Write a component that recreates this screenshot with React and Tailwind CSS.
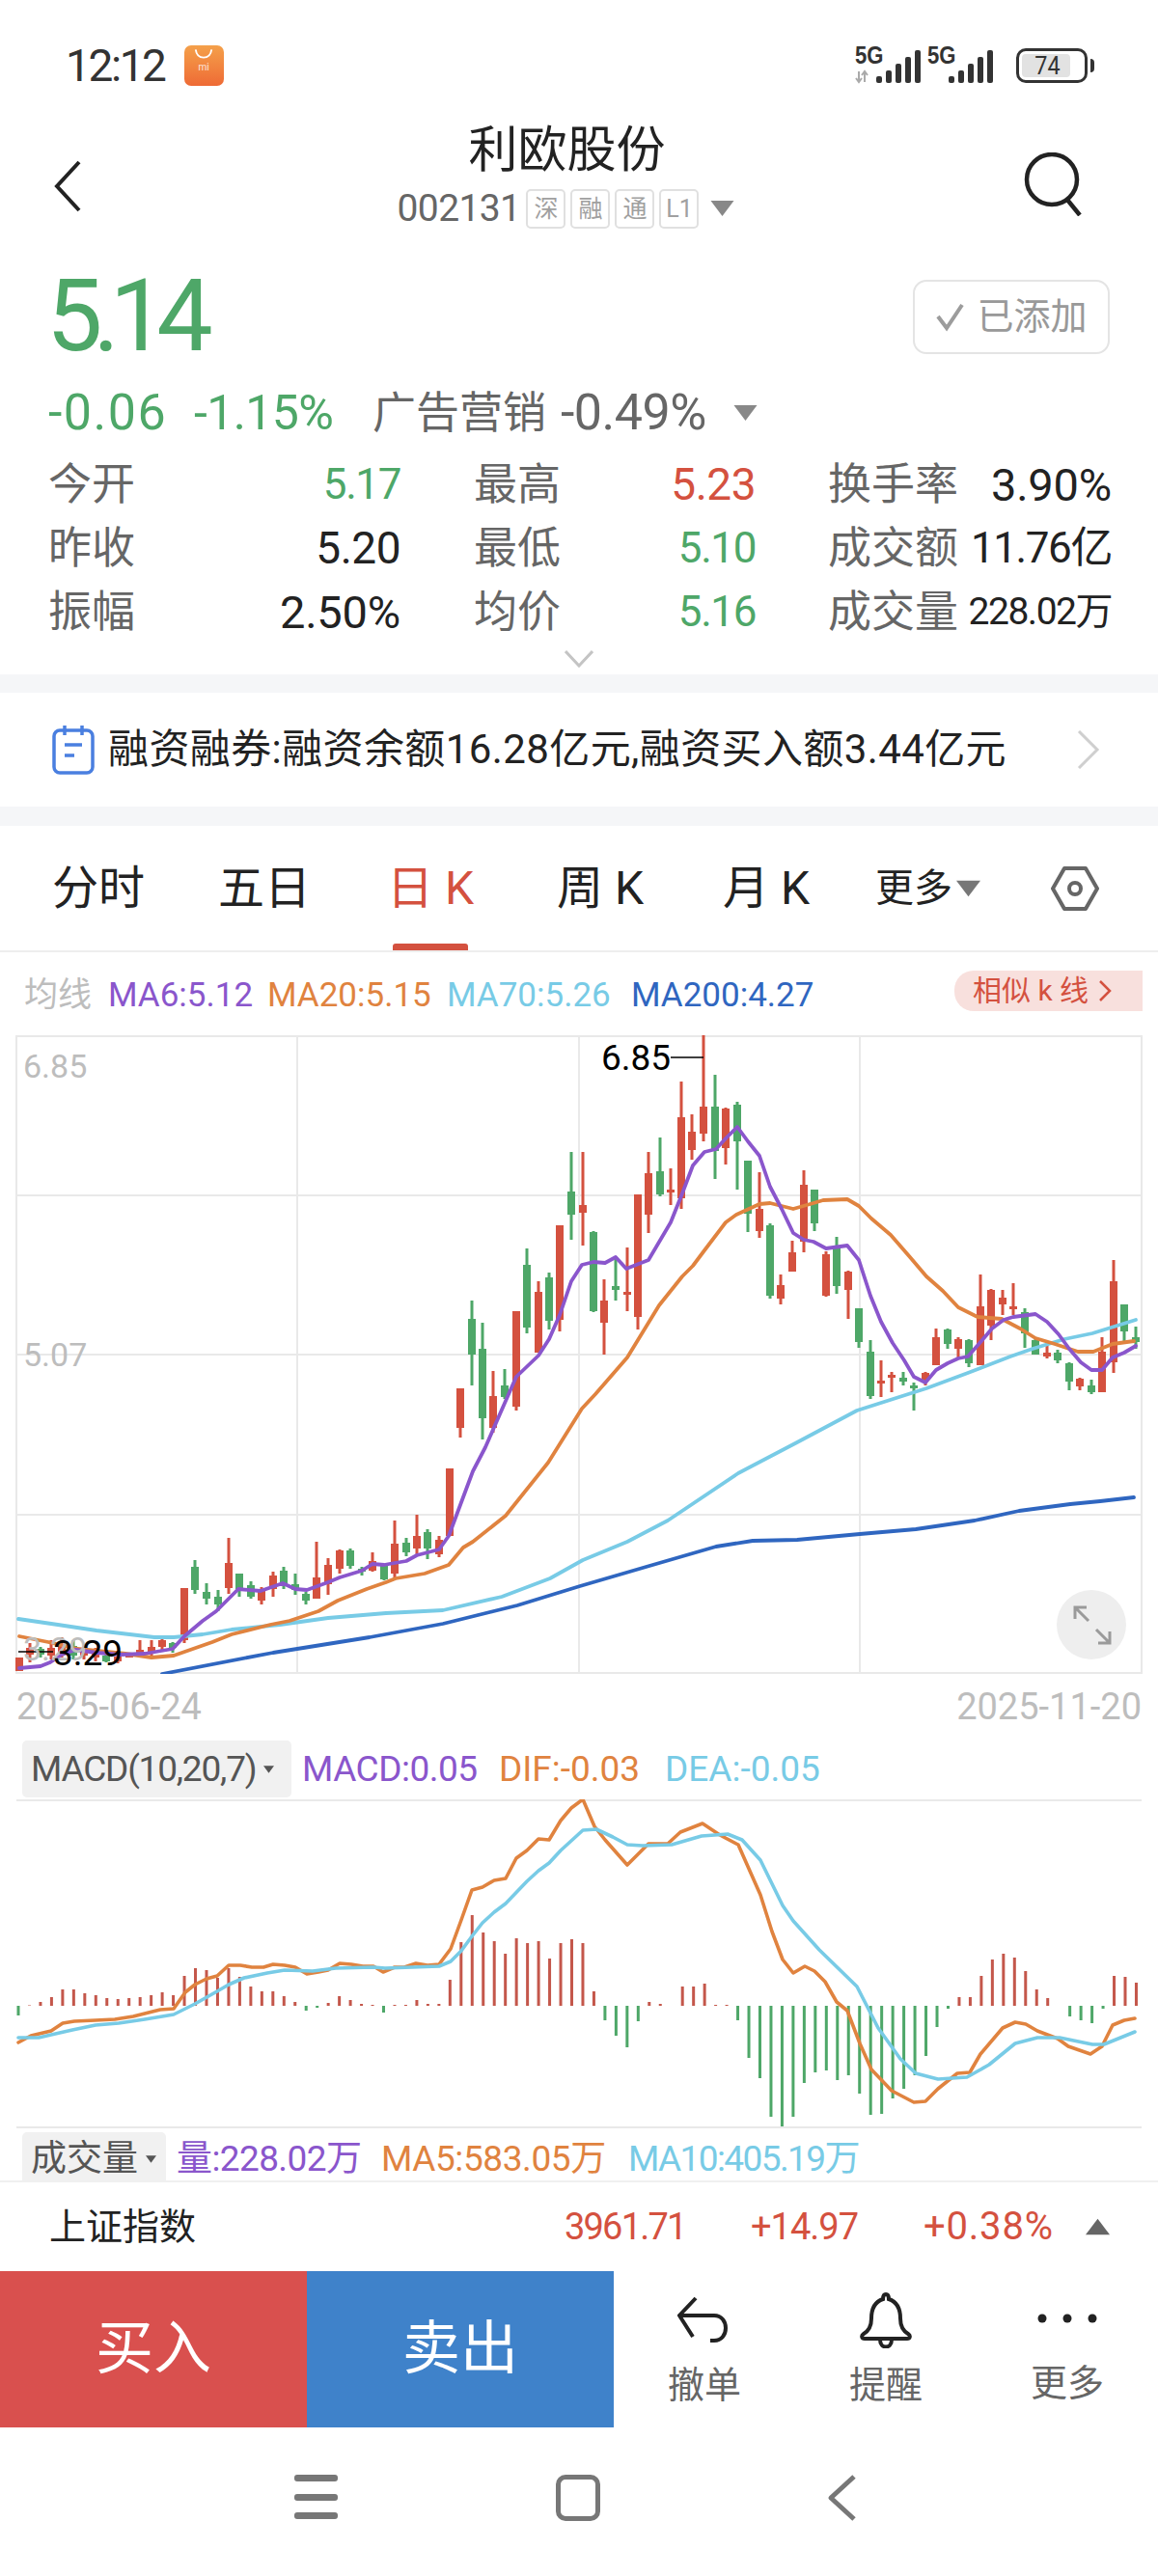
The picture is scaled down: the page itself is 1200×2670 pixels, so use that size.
import React from "react";

const G = "#4ea768", R = "#d4513f", PU = "#8a56cc", OR = "#e0833f", CY = "#78cbe6", BL = "#2f66c0";

const candles = [
[20,1718,1718,1732,1732,'r'],[31,1703,1708,1715,1723,'r'],[42,1707,1709,1715,1718,'g'],[53,1700,1708,1716,1720,'r'],[64,1697,1704,1714,1718,'r'],[76,1700,1706,1716,1720,'g'],[87,1706,1709,1716,1720,'r'],[99,1708,1712,1718,1722,'r'],
[110,1713,1716,1722,1723,'g'],[122,1717,1717,1722,1724,'r'],[134,1715,1715,1718,1718,'r'],[145,1700,1710,1715,1718,'r'],[157,1700,1707,1713,1717,'r'],[168,1698,1700,1707,1710,'r'],[179,1702,1703,1708,1713,'g'],[191,1646,1646,1700,1703,'r'],
[202,1617,1624,1648,1652,'g'],[214,1641,1650,1657,1663,'g'],[226,1648,1655,1663,1670,'g'],[237,1594,1620,1646,1652,'r'],[248,1631,1631,1647,1655,'g'],[260,1639,1643,1655,1657,'g'],[271,1645,1648,1659,1663,'r'],[283,1629,1633,1647,1655,'r'],
[294,1624,1628,1642,1647,'g'],[306,1631,1642,1648,1653,'g'],[317,1650,1652,1659,1663,'g'],[328,1598,1635,1657,1657,'r'],[340,1615,1622,1642,1653,'r'],[352,1606,1607,1626,1631,'r'],[363,1605,1607,1623,1626,'g'],[375,1624,1626,1628,1633,'g'],
[386,1609,1618,1628,1629,'r'],[398,1622,1623,1637,1638,'g'],[409,1576,1600,1631,1635,'r'],[421,1594,1599,1609,1613,'g'],[432,1570,1592,1605,1613,'r'],[443,1585,1588,1605,1616,'g'],[455,1592,1596,1611,1614,'r'],[466,1522,1522,1592,1592,'r'],
[477,1439,1439,1480,1490,'r'],[489,1348,1367,1404,1436,'g'],[500,1371,1398,1470,1492,'g'],[511,1421,1447,1480,1485,'r'],[523,1419,1436,1448,1450,'g'],[535,1359,1359,1458,1462,'r'],[546,1294,1311,1376,1382,'g'],[558,1328,1339,1402,1402,'r'],
[569,1319,1324,1369,1378,'g'],[580,1270,1270,1368,1380,'r'],[592,1194,1235,1259,1285,'g'],[604,1194,1249,1257,1291,'r'],[615,1276,1277,1359,1360,'g'],[626,1326,1348,1371,1404,'r'],[638,1303,1333,1337,1348,'g'],[650,1293,1339,1342,1359,'r'],
[661,1238,1238,1365,1378,'r'],[672,1194,1216,1259,1278,'r'],[684,1179,1214,1238,1240,'g'],[695,1211,1233,1236,1249,'r'],[706,1121,1158,1242,1253,'r'],[717,1155,1173,1192,1202,'r'],[729,1073,1147,1175,1183,'r'],[741,1114,1147,1193,1222,'g'],
[752,1148,1149,1190,1207,'r'],[764,1142,1145,1183,1233,'g'],[775,1203,1203,1258,1277,'g'],[787,1215,1253,1276,1283,'r'],[798,1268,1270,1343,1346,'g'],[809,1321,1332,1346,1352,'r'],[821,1286,1298,1318,1318,'r'],[833,1213,1228,1287,1298,'r'],
[844,1233,1233,1268,1276,'g'],[856,1297,1300,1343,1344,'r'],[867,1282,1293,1333,1341,'g'],[879,1317,1318,1337,1367,'r'],[890,1356,1356,1391,1397,'g'],[902,1389,1401,1447,1450,'g'],[913,1410,1431,1433,1448,'r'],[924,1422,1425,1428,1443,'r'],
[936,1422,1428,1432,1436,'g'],[947,1433,1436,1439,1462,'g'],[959,1422,1423,1430,1436,'r'],[970,1377,1386,1415,1415,'r'],[982,1377,1378,1393,1398,'g'],[993,1386,1388,1398,1408,'r'],[1004,1388,1389,1413,1417,'g'],[1016,1321,1354,1415,1415,'r'],
[1027,1336,1337,1374,1389,'r'],[1039,1337,1345,1352,1363,'r'],[1050,1330,1354,1357,1363,'r'],[1062,1356,1360,1382,1397,'g'],[1073,1388,1389,1404,1404,'g'],[1085,1393,1402,1406,1408,'r'],[1096,1399,1402,1410,1413,'g'],[1108,1412,1413,1432,1441,'g'],
[1119,1428,1429,1437,1441,'r'],[1131,1430,1436,1443,1445,'g'],[1142,1386,1401,1443,1443,'r'],[1154,1306,1328,1412,1423,'r'],[1165,1352,1352,1380,1392,'g'],[1177,1375,1386,1391,1398,'g'],
];

const ma6 = "20,1729 42,1727 52,1723 64,1715 78,1710 100,1713 125,1715 150,1714 179,1709 191,1696 210,1680 224,1670 247,1647 270,1649 293,1641 306,1647 318,1648 340,1640 352,1635 375,1628 386,1621 398,1622 409,1620 421,1618 432,1612 455,1606 465,1592 490,1525 503,1500 535,1427 558,1405 569,1388 580,1363 592,1328 603,1311 615,1308 627,1309 638,1303 649,1315 672,1306 695,1267 707,1237 718,1208 730,1194 742,1191 752,1180 764,1168 775,1183 787,1198 798,1230 810,1253 822,1278 833,1285 843,1287 856,1294 878,1291 890,1306 902,1343 913,1370 925,1392 937,1410 947,1427 959,1433 970,1420 982,1413 993,1408 1003,1406 1017,1390 1028,1377 1040,1368 1050,1365 1073,1362 1085,1370 1097,1383 1108,1398 1120,1412 1131,1420 1142,1420 1153,1407 1165,1402 1177,1395";
const ma20 = "20,1696 50,1702 80,1709 110,1712 130,1714 157,1718 180,1716 220,1702 240,1694 280,1684 300,1680 330,1670 350,1659 380,1647 400,1640 410,1636 440,1631 465,1622 480,1604 490,1598 524,1571 568,1516 578,1500 603,1460 617,1445 650,1407 683,1353 707,1323 718,1312 730,1296 752,1267 763,1259 787,1248 798,1247 822,1253 843,1247 853,1244 878,1243 890,1250 903,1263 923,1280 943,1303 960,1323 977,1338 993,1355 1013,1365 1038,1367 1057,1377 1073,1387 1093,1393 1117,1401 1133,1401 1153,1393 1175,1390";
const ma70 = "19,1678 60,1684 100,1690 160,1697 180,1697 210,1694 240,1689 290,1684 340,1677 400,1672 459,1669 520,1655 570,1636 604,1617 650,1598 692,1576 765,1527 826,1495 888,1462 960,1439 1003,1423 1047,1406 1070,1398 1103,1388 1132,1382 1177,1368";
const ma200 = "168,1735 283,1713 383,1697 459,1683 536,1664 601,1644 673,1623 742,1603 780,1597 826,1596 891,1590 949,1585 1010,1576 1056,1566 1109,1559 1140,1556 1175,1552";

const hist = [-10,0.5,4,9,17,17,13,11,8,7,8,9,11,14,11,31,39,37,29,39,30,20,15,15,10,4,-5,-2,3,10,6,2,1,-7,1,1,6,2,2,27,66,94,76,67,54,70,65,67,49,65,69,65,15,-15,-31,-43,-16,4,2,0,20,20,23,1,1,-15,-54,-75,-115,-125,-115,-80,-69,-67,-77,-72,-91,-113,-112,-96,-86,-72,-52,-22,-3,9,9,31,48,54,50,36,17,8,0,-11,-15,-18,-3,31,30,24];

const dif = "19,2117 32,2110 53,2105 65,2097 77,2095 99,2094 119,2093 138,2090 166,2083 180,2082 192,2065 202,2057 214,2051 225,2048 237,2037 249,2037 261,2039 273,2039 283,2036 295,2037 306,2039 318,2046 330,2044 340,2042 352,2035 364,2036 376,2038 387,2038 397,2044 409,2039 419,2039 431,2035 443,2037 455,2036 467,2020 478,1990 489,1959 500,1956 512,1949 524,1947 535,1926 546,1918 558,1906 569,1907 581,1887 592,1874 604,1865 616,1893 627,1907 650,1933 672,1911 692,1911 705,1899 728,1890 746,1902 765,1912 788,1964 800,2002 811,2031 822,2045 834,2038 844,2043 855,2054 867,2075 878,2084 891,2118 903,2145 924,2167 947,2179 959,2178 972,2165 992,2149 1005,2148 1016,2129 1039,2102 1052,2096 1063,2098 1075,2105 1096,2113 1107,2121 1130,2129 1142,2121 1153,2099 1165,2094 1176,2092";
const dea = "19,2112 40,2112 53,2109 75,2104 99,2099 123,2097 150,2093 180,2088 190,2083 202,2077 225,2064 237,2057 253,2050 277,2045 295,2042 324,2043 348,2040 387,2039 399,2040 455,2038 467,2033 478,2022 489,2007 500,1993 512,1982 524,1973 546,1950 558,1939 569,1931 581,1918 604,1897 618,1896 635,1904 650,1912 666,1913 696,1912 727,1903 754,1901 769,1907 788,1928 811,1975 822,1991 849,2021 888,2059 910,2102 933,2134 949,2149 972,2155 1002,2153 1025,2140 1052,2118 1075,2112 1098,2112 1132,2119 1144,2119 1176,2106";

function Tri({ className, up }) {
  return (
    <svg viewBox="0 0 24 16" className={className}>
      <polygon points={up ? "12,0 24,16 0,16" : "0,0 24,0 12,16"} fill="currentColor" />
    </svg>
  );
}

function Signal({ arrows }) {
  return (
    <div className="relative w-[72px] h-[38px]">
      <span className="absolute left-0 top-[-5px] text-[26px] leading-none font-bold text-[#333] [font-family:'Liberation_Sans',sans-serif] scale-x-[0.85] origin-left">5G</span>
      <svg viewBox="0 0 72 38" className="absolute inset-0 w-[72px] h-[38px]">
        {arrows && <g stroke="#aaa" strokeWidth="2" fill="none"><path d="M4 25v11M1 32l3 4 3-4M10 36V25M7 29l3-4 3 4" /></g>}
        <g fill="#333">
          <rect x="22" y="30" width="6" height="7" rx="2" />
          <rect x="32" y="24" width="6" height="13" rx="2" />
          <rect x="42" y="17" width="6" height="20" rx="2" />
          <rect x="52" y="10" width="6" height="27" rx="2" />
          <rect x="62" y="3" width="6" height="34" rx="2" />
        </g>
      </svg>
    </div>
  );
}

function DataCell({ label, value, color, w, cls }) {
  return (
    <div className={`flex items-center justify-between ${w}`}>
      <span className="text-[45px] leading-none text-[#666]">{label}</span>
      <span className={`leading-none ${cls} ${color}`}>{value}</span>
    </div>
  );
}

function DataRow({ a, b, c }) {
  return (
    <div className="flex h-[66px] items-center pl-[50px]">
      <DataCell {...a} w="w-[365px]" />
      <div className="w-[76px]" />
      <DataCell {...b} w="w-[292px]" />
      <div className="w-[75px]" />
      <DataCell {...c} w="w-[294px]" />
    </div>
  );
}

function Tag({ children }) {
  return <span className="flex items-center justify-center w-[41px] h-[41px] border-2 border-[#e0e0e0] rounded-[5px] text-[25px] leading-none text-[#a0a0a0]">{children}</span>;
}

function Tab({ children, active, w }) {
  return (
    <div className={`relative flex h-full items-center justify-center text-[48px] leading-none ${w} ${active ? "text-[#d4513f]" : "text-[#222]"}`}>
      <span>{children}</span>
      {active && <span className="absolute bottom-0 left-[22px] w-[78px] h-[7px] rounded-t-[3px] bg-[#d4513f]" />}
    </div>
  );
}

function KChart() {
  return (
    <div className="relative h-[662px] w-[1200px]">
      <svg viewBox="0 1073 1200 662" className="block w-[1200px] h-[662px]">
        <g stroke="#e9e9e9" strokeWidth="2" fill="none">
          <rect x="17" y="1074" width="1166" height="660" />
          <path d="M308 1074V1734M600 1074V1734M891 1074V1734M17 1239H1183M17 1404H1183M17 1570H1183" />
        </g>
        {candles.map(([x, wt, bt, bb, wb, c], i) => {
          const col = c === "r" ? R : G;
          return (
            <g key={i} fill={col}>
              <rect x={x - 1.5} y={wt} width="3" height={wb - wt} />
              <rect x={x - 4} y={bt} width="8" height={Math.max(bb - bt, 3)} />
            </g>
          );
        })}
        <g fill="none" strokeWidth="3.8" strokeLinejoin="round" strokeLinecap="round">
          <polyline points={ma200} stroke={BL} />
          <polyline points={ma70} stroke={CY} />
          <polyline points={ma20} stroke={OR} />
          <polyline points={ma6} stroke={PU} />
        </g>
        <path d="M695 1096H729M19 1712H55" stroke="#000" strokeWidth="1.5" />
        <ellipse cx="1131" cy="1684" rx="36" ry="36" fill="#eeeeee" />
        <g stroke="#9a9a9a" strokeWidth="3" fill="none">
          <path d="M1114 1666L1128 1680M1114 1678V1666H1126" />
          <path d="M1150 1703L1136 1689M1150 1691V1703H1138" />
        </g>
      </svg>
      <span className="absolute left-[24px] top-[8px] text-[34px] leading-[48px] text-[#bdbdbd]">6.85</span>
      <span className="absolute left-[24px] top-[307px] text-[34px] leading-[48px] text-[#bdbdbd]">5.07</span>
      <span className="absolute left-[24px] top-[612px] text-[34px] leading-[48px] text-[#bdbdbd]">3.29</span>
      <span className="absolute left-[623px] top-[0px] text-[37px] leading-[48px] text-black">6.85</span>
      <span className="absolute left-[55px] top-[617px] text-[37px] leading-[48px] text-black">3.29</span>
    </div>
  );
}

function MacdChart() {
  return (
    <svg viewBox="0 1865 1200 341" className="block w-[1200px] h-[341px]">
      <path d="M17 1866H1183M17 2205H1183" stroke="#e9e9e9" strokeWidth="2" fill="none" />
      {hist.map((h, i) => {
        const x = 19 + 11.47 * i;
        return <rect key={i} x={x - 1.5} y={h > 0 ? 2079 - h : 2079} width="3" height={Math.abs(h)} fill={h > 0 ? "#c4574b" : G} />;
      })}
      <g fill="none" strokeWidth="3.6" strokeLinejoin="round" strokeLinecap="round">
        <polyline points={dif} stroke={OR} />
        <polyline points={dea} stroke={CY} />
      </g>
    </svg>
  );
}

export default function App() {
  return (
    <div className="w-[1200px] h-[2670px] bg-white overflow-hidden [font-family:Roboto,'Noto_Sans_CJK_SC',sans-serif]">
      {/* status bar */}
      <div className="h-[120px] flex items-start justify-between pt-[47px] pl-[68px] pr-[66px]">
        <div className="flex items-center gap-[20px]">
          <span className="text-[46px] leading-[42px] tracking-[-2.4px] text-[#333]">12:12</span>
          <div className="relative w-[41px] h-[42px] rounded-[7px] bg-gradient-to-b from-[#f4a04a] to-[#ee6a35] flex flex-col items-center pt-[3px]">
            <svg viewBox="0 0 24 12" className="w-[22px] h-[12px]"><path d="M3 1c1 7 5 9 9 9s8-2 9-9" fill="none" stroke="#fff" strokeWidth="2" /></svg>
            <span className="text-[10px] leading-[16px] text-white/80">mi</span>
          </div>
        </div>
        <div className="flex items-center gap-[3px] pt-[2px]">
          <Signal arrows />
          <Signal />
          <div className="relative w-[74px] h-[36px] ml-[17px] border-[3px] border-[#333] rounded-[10px] p-[3px]">
            <div className="w-[50px] h-full rounded-[4px] bg-[#e2e2e2]" />
            <span className="absolute inset-0 flex items-center justify-center text-[26px] leading-none text-[#333] scale-x-[0.9] pr-[10px]">74</span>
          </div>
          <div className="w-[4px] h-[14px] rounded-r bg-[#333]" />
        </div>
      </div>

      {/* header */}
      <div className="h-[140px] flex">
        <div className="w-[200px] pl-[55px] pt-[46px]">
          <svg viewBox="0 0 30 54" className="w-[30px] h-[54px]"><path d="M27 2L4 27l23 25" fill="none" stroke="#222" strokeWidth="4" /></svg>
        </div>
        <div className="w-[775px] flex flex-col items-center">
          <div className="h-[70px] flex items-center text-[51px] leading-none text-[#222]">利欧股份</div>
          <div className="h-[52px] flex items-center gap-[5px] pr-[2px]">
            <span className="text-[39px] leading-none text-[#666] tracking-[-0.6px] mr-[1px]">002131</span>
            <Tag>深</Tag><Tag>融</Tag><Tag>通</Tag><Tag>L1</Tag>
            <Tri className="w-[25px] h-[16px] text-[#888] ml-[7px]" />
          </div>
        </div>
        <div className="pl-[85px] pt-[38px]">
          <svg viewBox="0 0 66 66" className="w-[66px] h-[66px]"><circle cx="30" cy="28" r="26" fill="none" stroke="#222" strokeWidth="4.5" /><path d="M46 49l13 16" stroke="#222" strokeWidth="4.5" /></svg>
        </div>
      </div>

      {/* price */}
      <div className="h-[136px] flex items-center justify-between pl-[48px] pr-[50px]">
        <span className="text-[104px] leading-none tracking-[-10px] text-[#4ea768]">5.14</span>
        <div className="w-[204px] h-[77px] rounded-[14px] border-2 border-[#e4e4e4] flex items-center justify-center gap-[11px]">
          <svg viewBox="0 0 32 32" className="w-[32px] h-[32px]"><path d="M3 16l9 12L28 4" fill="none" stroke="#9c9c9c" strokeWidth="4" /></svg>
          <span className="text-[38px] leading-none text-[#999]">已添加</span>
        </div>
      </div>
      <div className="h-[64px] flex items-center pl-[50px]">
        <span className="text-[52px] leading-none tracking-[1.5px] text-[#4ea768] w-[151px]">-0.06</span>
        <span className="text-[50px] leading-none tracking-[-0.6px] text-[#4ea768] w-[185px]">-1.15%</span>
        <span className="text-[45px] leading-none text-[#666] w-[195px]">广告营销</span>
        <span className="text-[52px] leading-none tracking-[-0.5px] text-[#666] w-[179px]">-0.49%</span>
        <Tri className="w-[25px] h-[16px] text-[#888]" />
      </div>

      {/* data */}
      <div className="pt-[9px]">
        <DataRow a={{ label: "今开", value: "5.17", color: "text-[#4ea768]", cls: "text-[44px] tracking-[-1.4px]" }} b={{ label: "最高", value: "5.23", color: "text-[#d4513f]", cls: "text-[46px] tracking-[-0.5px]" }} c={{ label: "换手率", value: "3.90%", color: "text-[#222]", cls: "text-[47px] tracking-[-0.2px]" }} />
        <DataRow a={{ label: "昨收", value: "5.20", color: "text-[#222]", cls: "text-[46px] tracking-[-0.5px]" }} b={{ label: "最低", value: "5.10", color: "text-[#4ea768]", cls: "text-[44px] tracking-[-1.4px]" }} c={{ label: "成交额", value: "11.76亿", color: "text-[#222]", cls: "text-[44px] tracking-[-1.4px]" }} />
        <DataRow a={{ label: "振幅", value: "2.50%", color: "text-[#222]", cls: "text-[47px] tracking-[-0.2px]" }} b={{ label: "均价", value: "5.16", color: "text-[#4ea768]", cls: "text-[44px] tracking-[-1.4px]" }} c={{ label: "成交量", value: "228.02万", color: "text-[#222]", cls: "text-[39px] tracking-[-1.5px]" }} />
      </div>
      <div className="h-[32px] flex items-center justify-center">
        <svg viewBox="0 0 30 18" className="w-[30px] h-[18px]"><path d="M1 1l14 15L29 1" fill="none" stroke="#c4c4c4" strokeWidth="3" /></svg>
      </div>
      <div className="h-[19px] bg-[#f5f6f8]" />

      {/* banner */}
      <div className="h-[118px] flex items-center pl-[54px] pr-[60px]">
        <svg viewBox="0 0 44 52" className="w-[44px] h-[52px] mr-[14px]">
          <rect x="2" y="6" width="40" height="44" rx="6" fill="none" stroke="#4a7fe0" strokeWidth="3.5" />
          <path d="M13 1v10M31 1v10M13 21h18M13 32h10" stroke="#4a7fe0" strokeWidth="3.5" fill="none" />
        </svg>
        <span className="text-[42px] leading-none text-[#222] tracking-[0.4px] flex-1 whitespace-nowrap">融资融券:融资余额16.28亿元,融资买入额3.44亿元</span>
        <svg viewBox="0 0 24 40" className="w-[24px] h-[40px]"><path d="M2 1l19 19L2 39" fill="none" stroke="#cfcfcf" strokeWidth="3" /></svg>
      </div>
      <div className="h-[20px] bg-[#f5f6f8]" />

      {/* tabs */}
      <div className="h-[131px] flex items-stretch pl-[16px] border-b-2 border-[#eeeeee]">
        <Tab w="w-[172px]">分时</Tab>
        <Tab w="w-[172px]">五日</Tab>
        <div className="w-[25px]" />
        <Tab w="w-[122px]" active>日 K</Tab>
        <div className="w-[29px]" />
        <Tab w="w-[172px]">周 K</Tab>
        <Tab w="w-[172px]">月 K</Tab>
        <div className="flex items-center gap-[4px] text-[40px] leading-none text-[#222] pl-[27px]">
          更多
          <Tri className="w-[25px] h-[18px] text-[#777]" />
        </div>
        <div className="flex items-center pl-[73px]">
          <svg viewBox="0 0 50 50" className="w-[50px] h-[50px]">
            <path d="M14 4h22l12 21-12 21H14L2 25z" fill="none" stroke="#666" strokeWidth="4" strokeLinejoin="round" />
            <circle cx="25" cy="25" r="6" fill="none" stroke="#666" strokeWidth="4" />
          </svg>
        </div>
      </div>

      {/* MA legend */}
      <div className="h-[86px] flex items-center pl-[25px] pt-[3px] text-[35px] leading-none">
        <span className="text-[#bdbdbd] w-[87px]">均线</span>
        <span className="text-[#8a56cc] w-[165px]">MA6:5.12</span>
        <span className="text-[#e0833f] w-[186px]">MA20:5.15</span>
        <span className="text-[#78cbe6] w-[191px]">MA70:5.26</span>
        <span className="text-[#2f66c0] w-[335px]">MA200:4.27</span>
        <div className="h-[42px] w-[195px] rounded-l-[20px] bg-[#f8e0dd] text-[#d4513f] text-[30px] flex items-center pl-[19px] gap-[10px] mb-[9px]">
          <span>相似 k 线</span>
          <svg viewBox="0 0 14 24" className="w-[14px] h-[24px]"><path d="M2 2l10 10L2 22" fill="none" stroke="#d4513f" strokeWidth="2.5" /></svg>
        </div>
      </div>

      <KChart />

      <div className="h-[69px] flex items-center justify-between px-[17px] pb-[2px] text-[38px] leading-none text-[#bdbdbd]">
        <span>2025-06-24</span>
        <span>2025-11-20</span>
      </div>

      {/* MACD */}
      <div className="h-[61px] flex items-start pl-[23px] text-[37px] leading-none">
        <div className="w-[279px] h-[59px] bg-[#f1f1f1] rounded-[5px] flex items-center pl-[9px] text-[#555] gap-[8px] tracking-[-1.2px]">
          MACD(10,20,7)
          <Tri className="w-[11px] h-[8px] text-[#555]" />
        </div>
        <div className="h-[59px] flex items-center pl-[11px]">
          <span className="text-[#8a56cc] w-[204px] tracking-[-0.5px]">MACD:0.05</span>
          <span className="text-[#e0833f] w-[172px]">DIF:-0.03</span>
          <span className="text-[#78cbe6]">DEA:-0.05</span>
        </div>
      </div>
      <MacdChart />

      {/* volume */}
      <div className="h-[56px] flex items-end pl-[23px] text-[37px] leading-none border-b-2 border-[#f0f0f0]">
        <div className="w-[149px] h-[50px] bg-[#f1f1f1] rounded-t-[5px] flex items-center pl-[9px] pt-[5px] gap-[8px] text-[#555]">
          成交量
          <Tri className="w-[11px] h-[8px] text-[#555]" />
        </div>
        <div className="h-[50px] flex items-center pl-[11px] pt-[5px]">
          <span className="text-[#8a56cc] w-[212px] tracking-[-0.6px]">量:228.02万</span>
          <span className="text-[#e0833f] w-[256px] tracking-[-0.4px]">MA5:583.05万</span>
          <span className="text-[#78cbe6] tracking-[-1.6px]">MA10:405.19万</span>
        </div>
      </div>

      {/* ticker */}
      <div className="h-[92px] flex items-center pl-[51px]">
        <span className="text-[38px] leading-none text-[#222] w-[534px]">上证指数</span>
        <span className="text-[38px] leading-none tracking-[-1.8px] text-[#d4513f] w-[193px]">3961.71</span>
        <span className="text-[38px] leading-none tracking-[-1px] text-[#d4513f] w-[179px]">+14.97</span>
        <span className="text-[40px] leading-none tracking-[0.8px] text-[#d4513f] w-[168px]">+0.38%</span>
        <Tri up className="w-[25px] h-[18px] text-[#666]" />
      </div>

      {/* actions */}
      <div className="h-[162px] flex">
        <div className="w-[318px] shrink-0 bg-[#d9504e] flex items-center justify-center text-[60px] leading-none text-white">买入</div>
        <div className="w-[318px] shrink-0 bg-[#3f82ca] flex items-center justify-center text-[60px] leading-none text-white">卖出</div>
        <div className="flex-1 flex">
          <div className="w-[188px] flex flex-col items-center pt-[26px]">
            <svg viewBox="0 0 56 48" className="w-[56px] h-[48px] mb-[25px]">
              <path d="M19 2L2 20l14 22M2 20h36c16 0 16 26 0 26H34" fill="none" stroke="#222" strokeWidth="4" />
            </svg>
            <span className="text-[38px] leading-none text-[#666]">撤单</span>
          </div>
          <div className="w-[188px] flex flex-col items-center pt-[22px]">
            <svg viewBox="0 0 54 58" className="w-[54px] h-[58px] mb-[19px]">
              <path d="M27 2c-2 0-3 2-3 5-9 3-12 10-12 20 0 9-3 13-8 16-3 2-2 5 1 5h44c3 0 4-3 1-5-5-3-8-7-8-16 0-10-3-17-12-20 0-3-1-5-3-5z" fill="none" stroke="#222" strokeWidth="4" />
              <path d="M21 49c0 10 12 10 12 0" fill="none" stroke="#222" strokeWidth="4" />
            </svg>
            <span className="text-[38px] leading-none text-[#666]">提醒</span>
          </div>
          <div className="w-[188px] flex flex-col items-center pt-[44px]">
            <svg viewBox="0 0 62 10" className="w-[62px] h-[10px] mb-[43px]">
              <circle cx="5" cy="5" r="4.5" fill="#222" /><circle cx="31" cy="5" r="4.5" fill="#222" /><circle cx="57" cy="5" r="4.5" fill="#222" />
            </svg>
            <span className="text-[38px] leading-none text-[#666]">更多</span>
          </div>
        </div>
      </div>

      {/* nav */}
      <div className="h-[154px] flex items-start pt-[49px] pl-[305px]">
        <div className="w-[45px] h-[46px] flex flex-col justify-between">
          <div className="h-[7px] rounded-[3px] bg-[#777]" />
          <div className="h-[7px] rounded-[3px] bg-[#777]" />
          <div className="h-[7px] rounded-[3px] bg-[#777]" />
        </div>
        <div className="w-[46px] h-[48px] ml-[226px] rounded-[10px] border-[5px] border-[#777]" />
        <svg viewBox="0 0 32 48" className="w-[32px] h-[48px] ml-[234px]"><path d="M29 2L5 24l24 22" fill="none" stroke="#777" strokeWidth="5" strokeLinejoin="round" /></svg>
      </div>
    </div>
  );
}
